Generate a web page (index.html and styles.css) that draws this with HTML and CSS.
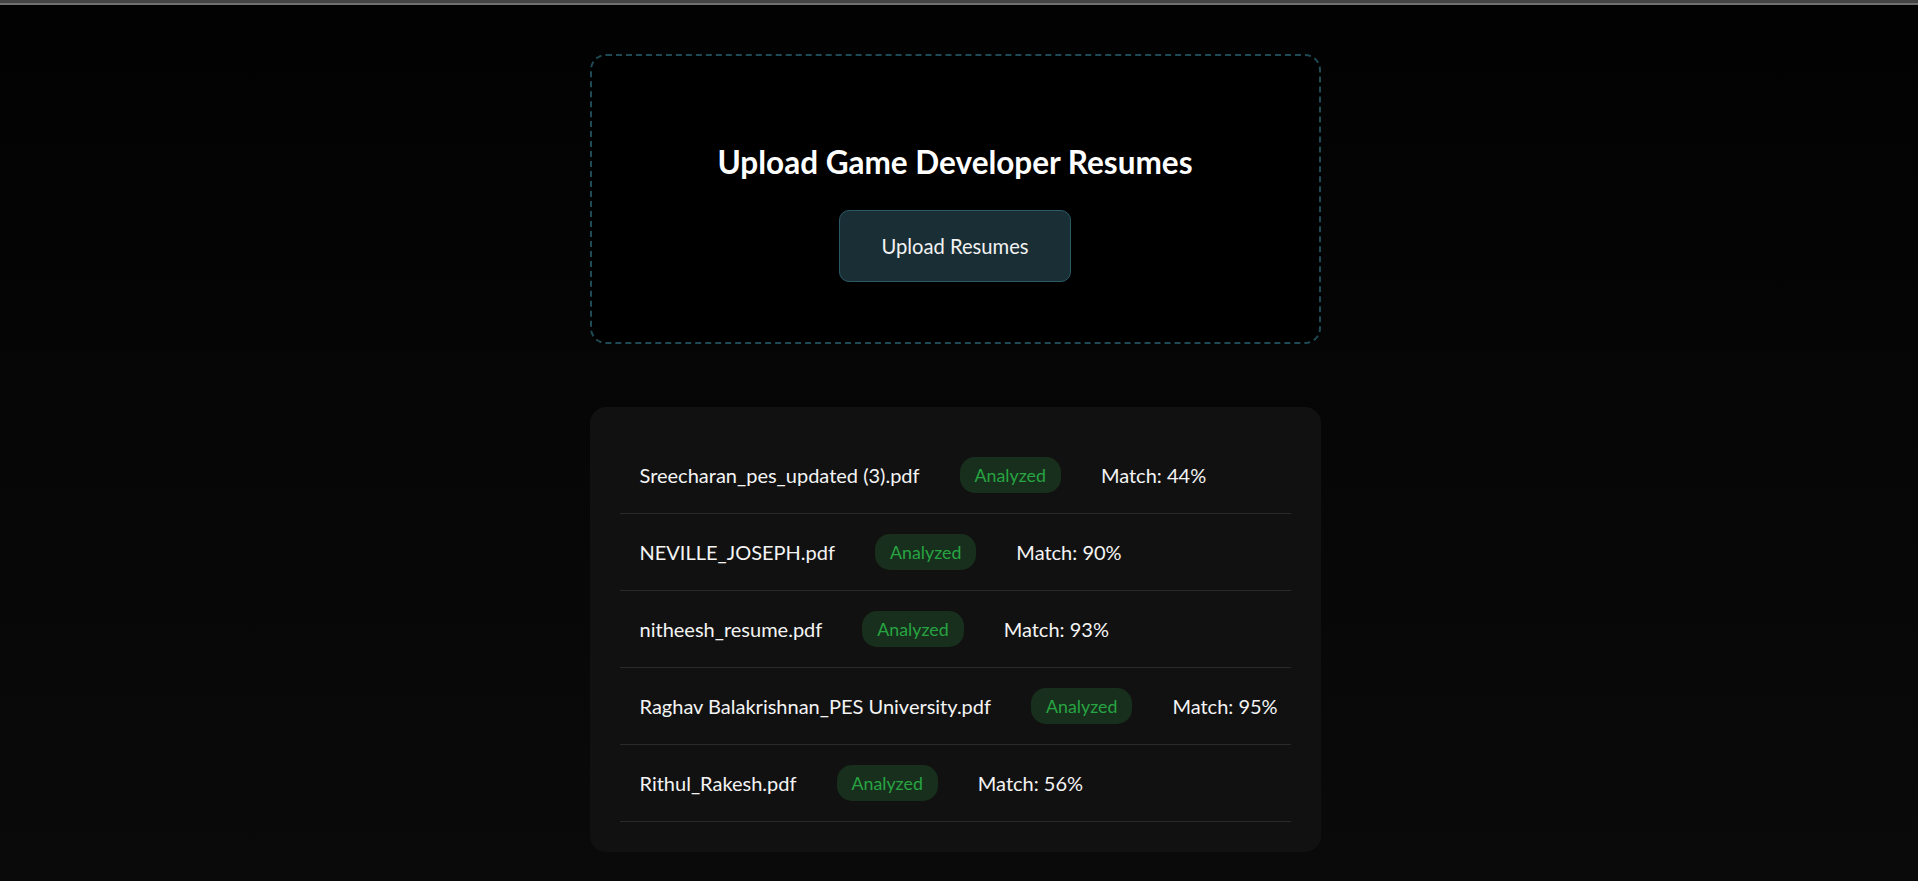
FILE: index.html
```html
<!DOCTYPE html>
<html lang="en">
<head>
<meta charset="utf-8">
<title>Game Developer Resume Analyzer</title>
<link rel="stylesheet" href="styles.css">
</head>
<body>
  <div class="topbar"></div>
  <main class="container">
    <section class="upload-box">
      <h2 class="upload-title">Upload Game Developer Resumes</h2>
      <button class="upload-btn" type="button">Upload Resumes</button>
    </section>

    <section class="results">
      <div class="row">
        <span class="file">Sreecharan_pes_updated (3).pdf</span>
        <span class="badge">Analyzed</span>
        <span class="match">Match: 44%</span>
      </div>
      <div class="row">
        <span class="file">NEVILLE_JOSEPH.pdf</span>
        <span class="badge">Analyzed</span>
        <span class="match">Match: 90%</span>
      </div>
      <div class="row">
        <span class="file">nitheesh_resume.pdf</span>
        <span class="badge">Analyzed</span>
        <span class="match">Match: 93%</span>
      </div>
      <div class="row">
        <span class="file">Raghav Balakrishnan_PES University.pdf</span>
        <span class="badge">Analyzed</span>
        <span class="match">Match: 95%</span>
      </div>
      <div class="row">
        <span class="file">Rithul_Rakesh.pdf</span>
        <span class="badge">Analyzed</span>
        <span class="match">Match: 56%</span>
      </div>
    </section>
  </main>
</body>
</html>
```

FILE: styles.css
```css
html {
  overflow-y: scroll;
  min-height: 100%;
  background: linear-gradient(180deg, #020202 0%, #0a0a0a 100%);
}

html::-webkit-scrollbar {
  width: 8px;
}

html::-webkit-scrollbar-track {
  background: #0c0c0c;
}

html::-webkit-scrollbar-thumb {
  background: #222222;
  border-radius: 4px;
}

body {
  box-sizing: border-box;
  margin: 0;
  padding-right: 8px; /* scrollbar gutter of the original window */
  font-family: "Lato", "Open Sans", "Liberation Sans", sans-serif;
  color: #f4f4f4;
}

.topbar {
  height: 3px;
  margin-right: -8px;
  background: #444444;
  border-bottom: 2px solid #707070;
}

.container {
  width: 731px;
  margin: 49px auto 0;
}

.upload-box {
  box-sizing: border-box;
  height: 290px;
  padding: 60px 20px;
  border: 2px dashed #1f4a55;
  border-radius: 16px;
  background: #000000;
  display: flex;
  flex-direction: column;
  align-items: center;
}

.upload-title {
  margin: 28px 0 30px;
  font-size: 31.5px;
  line-height: 36px;
  font-weight: 700;
  color: #ffffff;
  white-space: nowrap;
}

.upload-btn {
  height: 72px;
  padding: 0 41px;
  border: 1px solid #2a5965;
  border-radius: 10px;
  background: #1a2f35;
  color: #f2f2f2;
  font-family: inherit;
  font-size: 20.2px;
}

.results {
  margin-top: 63px;
  padding: 30px;
  border-radius: 16px;
  background: #111111;
}

.row {
  display: flex;
  align-items: center;
  gap: 40px;
  padding: 20px;
  border-bottom: 1px solid #2a2a2a;
  font-size: 20px;
  white-space: nowrap;
}

.row > span {
  flex-shrink: 0;
}

.badge {
  display: inline-flex;
  align-items: center;
  height: 36px;
  padding: 0 15px;
  border-radius: 15px;
  background: #172f1c;
  color: #28a442;
  font-size: 17.8px;
}
```
